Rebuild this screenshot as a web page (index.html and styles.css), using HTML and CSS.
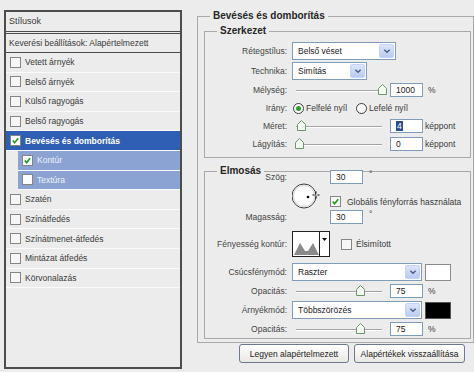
FILE: index.html
```html
<!DOCTYPE html>
<html lang="hu">
<head>
  <meta charset="UTF-8" />
  <title>Rétegstílus - Bevésés és domborítás</title>
  <link rel="stylesheet" href="styles.css">
</head>
<body>

<div class="dialog">

  <!-- bal oldali stíluslista -->
  <div class="styles-panel">
    <div class="panel-head">Stílusok</div>
    <div class="blend-row">Keverési beállítások: Alapértelmezett</div>
    <ul class="style-list">
      <li><span class="cb"></span>Vetett árnyék</li>
      <li><span class="cb"></span>Belső árnyék</li>
      <li><span class="cb"></span>Külső ragyogás</li>
      <li><span class="cb"></span>Belső ragyogás</li>
      <li class="active"><span class="cb on"><svg viewBox="0 0 10 10"><polyline points="2,5 4,7.5 8,2.5" /></svg></span>Bevésés és domborítás</li>
      <li class="sub"><span class="cb on"><svg viewBox="0 0 10 10"><polyline points="2,5 4,7.5 8,2.5" /></svg></span>Kontúr</li>
      <li class="sub"><span class="cb"></span>Textúra</li>
      <li><span class="cb"></span>Szatén</li>
      <li><span class="cb"></span>Színátfedés</li>
      <li><span class="cb"></span>Színátmenet-átfedés</li>
      <li><span class="cb"></span>Mintázat átfedés</li>
      <li><span class="cb"></span>Körvonalazás</li>
    </ul>
  </div>

  <!-- jobb oldali beállítások -->
  <div class="options">
    <fieldset class="group main">
      <legend>Bevésés és domborítás</legend>

      <fieldset class="group">
        <legend>Szerkezet</legend>
        <div class="rows structure">
          <div class="row tall">
            <span class="lbl">Rétegstílus:</span>
            <div class="select w-style"><span>Belső véset</span><span class="arrow"><svg viewBox="0 0 9 6"><polyline points="1.5,1.5 4.5,4.5 7.5,1.5" /></svg></span></div>
          </div>
          <div class="row tall">
            <span class="lbl">Technika:</span>
            <div class="select w-tech"><span>Simítás</span><span class="arrow"><svg viewBox="0 0 9 6"><polyline points="1.5,1.5 4.5,4.5 7.5,1.5" /></svg></span></div>
          </div>
          <div class="row">
            <span class="lbl">Mélység:</span>
            <div class="slider"><span class="thumb" style="left: 86px"><svg viewBox="0 0 9 11"><polygon points="0.5,4.5 4.5,0.5 8.5,4.5 8.5,10.5 0.5,10.5" /></svg></span></div>
            <span class="num">1000</span><span class="unit">%</span>
          </div>
          <div class="row">
            <span class="lbl">Irány:</span>
            <span class="radio on"></span><span class="opt">Felfelé nyíl</span>
            <span class="radio"></span><span class="opt">Lefelé nyíl</span>
          </div>
          <div class="row">
            <span class="lbl">Méret:</span>
            <div class="slider"><span class="thumb" style="left: 5px"><svg viewBox="0 0 9 11"><polygon points="0.5,4.5 4.5,0.5 8.5,4.5 8.5,10.5 0.5,10.5" /></svg></span></div>
            <span class="num"><span class="selected">4</span></span><span class="unit px">képpont</span>
          </div>
          <div class="row">
            <span class="lbl">Lágyítás:</span>
            <div class="slider"><span class="thumb" style="left: 3px"><svg viewBox="0 0 9 11"><polygon points="0.5,4.5 4.5,0.5 8.5,4.5 8.5,10.5 0.5,10.5" /></svg></span></div>
            <span class="num">0</span><span class="unit px">képpont</span>
          </div>
        </div>
      </fieldset>

      <fieldset class="group shading">
        <legend>Elmosás</legend>
        <div class="rows">
          <div class="angle">
            <span class="lbl a-angle">Szög:</span>
            <svg class="dial" viewBox="0 0 38 54" width="38" height="54">
              <circle cx="12" cy="26" r="12" fill="#fff" stroke="#3a3a3a" stroke-width="1" />
              <circle cx="12" cy="26" r="10.5" fill="none" stroke="#d6d6d6" stroke-width="1" />
              <circle cx="16" cy="27" r="1.3" fill="#000" />
              <path d="M24 21.5v2M24 26.5v2M20.5 25h2M25.5 25h2" stroke="#000" stroke-width="1" />
            </svg>
            <span class="num a-in1">30</span><span class="deg a-d1">°</span>
            <div class="chk a-global"><span class="cb on"><svg viewBox="0 0 10 10"><polyline points="2,5 4,7.5 8,2.5" /></svg></span>Globális fényforrás használata</div>
            <span class="lbl a-alt">Magasság:</span>
            <span class="num a-in2">30</span><span class="deg a-d2">°</span>
          </div>

          <div class="row contour">
            <span class="lbl">Fényesség kontúr:</span>
            <svg class="curve" viewBox="0 0 38 26" width="38" height="26">
              <rect x="0.5" y="0.5" width="37" height="25" fill="#fff" stroke="#222" />
              <polygon points="2,24 8,12 13,20 16,20 21,12 27,24" fill="#8a8a8a" />
              <line x1="27.5" y1="1" x2="27.5" y2="25" stroke="#222" />
              <polygon points="30,7 35,7 32.5,10" fill="#000" />
            </svg>
            <span class="chk smooth"><span class="cb"></span>Élsimított</span>
          </div>

          <div class="row tall mode">
            <span class="lbl">Csúcsfénymód:</span>
            <div class="select w-mode"><span>Raszter</span><span class="arrow"><svg viewBox="0 0 9 6"><polyline points="1.5,1.5 4.5,4.5 7.5,1.5" /></svg></span></div>
            <span class="swatch white"></span>
          </div>
          <div class="row">
            <span class="lbl">Opacitás:</span>
            <div class="slider"><span class="thumb" style="left: 64px"><svg viewBox="0 0 9 11"><polygon points="0.5,4.5 4.5,0.5 8.5,4.5 8.5,10.5 0.5,10.5" /></svg></span></div>
            <span class="num">75</span><span class="unit">%</span>
          </div>
          <div class="row tall">
            <span class="lbl">Árnyékmód:</span>
            <div class="select w-mode"><span>Többszörözés</span><span class="arrow"><svg viewBox="0 0 9 6"><polyline points="1.5,1.5 4.5,4.5 7.5,1.5" /></svg></span></div>
            <span class="swatch black"></span>
          </div>
          <div class="row">
            <span class="lbl">Opacitás:</span>
            <div class="slider"><span class="thumb" style="left: 64px"><svg viewBox="0 0 9 11"><polygon points="0.5,4.5 4.5,0.5 8.5,4.5 8.5,10.5 0.5,10.5" /></svg></span></div>
            <span class="num">75</span><span class="unit">%</span>
          </div>
        </div>
      </fieldset>
    </fieldset>

    <div class="buttons">
      <button class="btn b-default">Legyen alapértelmezett</button>
      <button class="btn b-reset">Alapértékek visszaállítása</button>
    </div>
  </div>

</div>

</body>
</html>
```

FILE: styles.css
```css
/* alap */
* {
  box-sizing: border-box;
}
body {
  margin: 0;
  background: #ececec;
  font-family: "Liberation Sans", Arial, sans-serif;
  font-size: 8.5px;
  color: #3a3a3a;
}
.dialog {
  display: flex;
  align-items: flex-start;
  width: 474px;
  height: 372px;
  padding: 10px 0 0 4px;
}

/* stíluslista */
.styles-panel {
  flex: none;
  width: 178px;
  height: 359px;
  border: 2px solid #4c4c4c;
  background: #ececec;
}
.panel-head {
  height: 22px;
  line-height: 19px;
  padding-left: 3px;
  border-bottom: 3px double #4c4c4c;
  font-size: 9px;
}
.blend-row {
  height: 19px;
  line-height: 18px;
  padding-left: 3px;
  border-bottom: 1px solid #4c4c4c;
}
.style-list {
  list-style: none;
  margin: 0;
  padding: 0;
}
.style-list li {
  display: flex;
  align-items: center;
  height: 19.6px;
  border-bottom: 1px solid #fafafa;
  padding-left: 4px;
}
.style-list li.active {
  background: #2f5fb4;
  color: #fff;
  font-weight: bold;
}
.style-list li.sub {
  margin-left: 12px;
  background: #8aa3d3;
  color: #eef2fa;
}
.cb {
  flex: none;
  display: inline-block;
  width: 11px;
  height: 11px;
  margin-right: 4px;
  border: 1px solid #858585;
  background: #f6f6f6;
}
.cb svg {
  display: block;
  width: 9px;
  height: 9px;
}
.cb polyline {
  fill: none;
  stroke: #1f9a1f;
  stroke-width: 1.8;
}
.active .cb, .sub .cb {
  background: #fff;
}

/* beállítások */
.options {
  flex: none;
  width: 277px;
  margin-left: 15px;
}
.group {
  margin: 3px 2px 0 6px;
  padding: 0;
  border: 1px solid #a9a9a9;
  min-width: 0;
}
.group.main {
  margin: 0;
  padding-bottom: 3px;
}
.group.shading {
  margin-top: 7px;
}
.group legend {
  margin-left: 12px;
  padding: 0 3px;
  font-size: 10px;
  line-height: 12px;
  font-weight: bold;
  color: #262626;
}
.rows {
  display: flex;
  flex-direction: column;
  gap: 2px;
  padding: 5px 0 1px;
}
.rows.structure {
  padding-bottom: 5px;
}
.row {
  display: flex;
  align-items: center;
  height: 16px;
}
.row.tall {
  height: 18px;
}
.lbl {
  flex: none;
  width: 87px;
  padding-right: 5px;
  text-align: right;
  color: #444;
}

/* legördülő */
.select {
  display: flex;
  align-items: center;
  height: 18px;
  padding-left: 5px;
  border: 1px solid #7f9db9;
  background: #fff;
  color: #222;
}
.select .arrow {
  margin-left: auto;
  margin-right: 1px;
  width: 15px;
  height: 14px;
  border: 1px solid #c3d3fd;
  border-radius: 2px;
  background: linear-gradient(#dce6fb, #b9cbf2);
  display: flex;
  align-items: center;
  justify-content: center;
}
.arrow svg {
  width: 8px;
  height: 6px;
}
.arrow polyline {
  fill: none;
  stroke: #4d6185;
  stroke-width: 1.6;
}
.w-style { width: 104px; }
.w-tech { width: 75px; }
.w-mode { width: 130px; }

/* csúszka */
.slider {
  position: relative;
  flex: none;
  width: 94px;
  height: 16px;
}
.slider::before {
  content: "";
  position: absolute;
  left: 4px;
  right: 4px;
  top: 8px;
  border-top: 1px solid #a5a5a5;
  border-bottom: 1px solid #fff;
}
.thumb {
  position: absolute;
  top: 2px;
  width: 9px;
  height: 11px;
}
.thumb svg {
  display: block;
  width: 9px;
  height: 11px;
}
.thumb polygon {
  fill: #f5f8f2;
  stroke: #6c966c;
  stroke-width: 1;
}
.num {
  flex: none;
  width: 33px;
  height: 14px;
  margin-left: 4px;
  padding-left: 5px;
  line-height: 12px;
  border: 1px solid #7f9db9;
  background: #fff;
  color: #222;
}
.selected {
  background: #2c4f8f;
  color: #fff;
  padding: 0 1px;
}
.unit {
  margin-left: 5px;
}
.unit.px {
  margin-left: 2px;
}

/* rádiógomb */
.radio {
  flex: none;
  width: 11px;
  height: 11px;
  margin-left: 1px;
  border: 1px solid #3c3c3c;
  border-radius: 50%;
  background: #fff;
  display: flex;
  align-items: center;
  justify-content: center;
}
.radio.on::after {
  content: "";
  width: 5px;
  height: 5px;
  border-radius: 50%;
  background: #2aa02a;
}
.opt {
  margin: 0 8px 0 2px;
}

/* szög */
.angle {
  display: grid;
  grid-template-columns: 87px 38px 35px 1fr;
  grid-template-rows: 14px 26px 14px;
  margin-top: -12px;
}
.angle .lbl {
  align-self: center;
}
.a-angle { grid-area: 1 / 1; }
.a-alt { grid-area: 3 / 1; }
.dial {
  grid-area: 1 / 2 / 4 / 3;
}
.angle .num {
  margin-left: 0;
}
.a-in1 { grid-area: 1 / 3; }
.a-in2 { grid-area: 3 / 3; }
.deg {
  padding-left: 4px;
  line-height: 8px;
}
.a-d1 { grid-area: 1 / 4; }
.a-d2 { grid-area: 3 / 4; }
.chk {
  display: flex;
  align-items: center;
}
.a-global {
  grid-area: 2 / 3 / 3 / 5;
  align-self: end;
  margin-bottom: 3px;
}
.a-global .cb {
  margin-right: 6px;
}

.row.contour {
  height: 26px;
  margin-top: 5px;
}
.smooth {
  margin-left: 11px;
}
.row.mode {
  margin-top: 4px;
}
.swatch {
  width: 26px;
  height: 17px;
  margin-left: 3px;
  border: 1px solid #8c8c8c;
}
.swatch.white { background: #fff; }
.swatch.black { background: #000; border-color: #555; }

/* gombok */
.buttons {
  display: flex;
  justify-content: flex-end;
  gap: 5px;
  padding: 1px 9px 0 0;
}
.btn {
  height: 19px;
  padding: 0;
  border: 1px solid #6d7a8e;
  border-radius: 3px;
  background: linear-gradient(#ffffff, #e9e8e3);
  font-family: "Liberation Sans", Arial, sans-serif;
  font-size: 8.5px;
  color: #222;
}
.b-default { width: 110px; }
.b-reset { width: 111px; }
```
